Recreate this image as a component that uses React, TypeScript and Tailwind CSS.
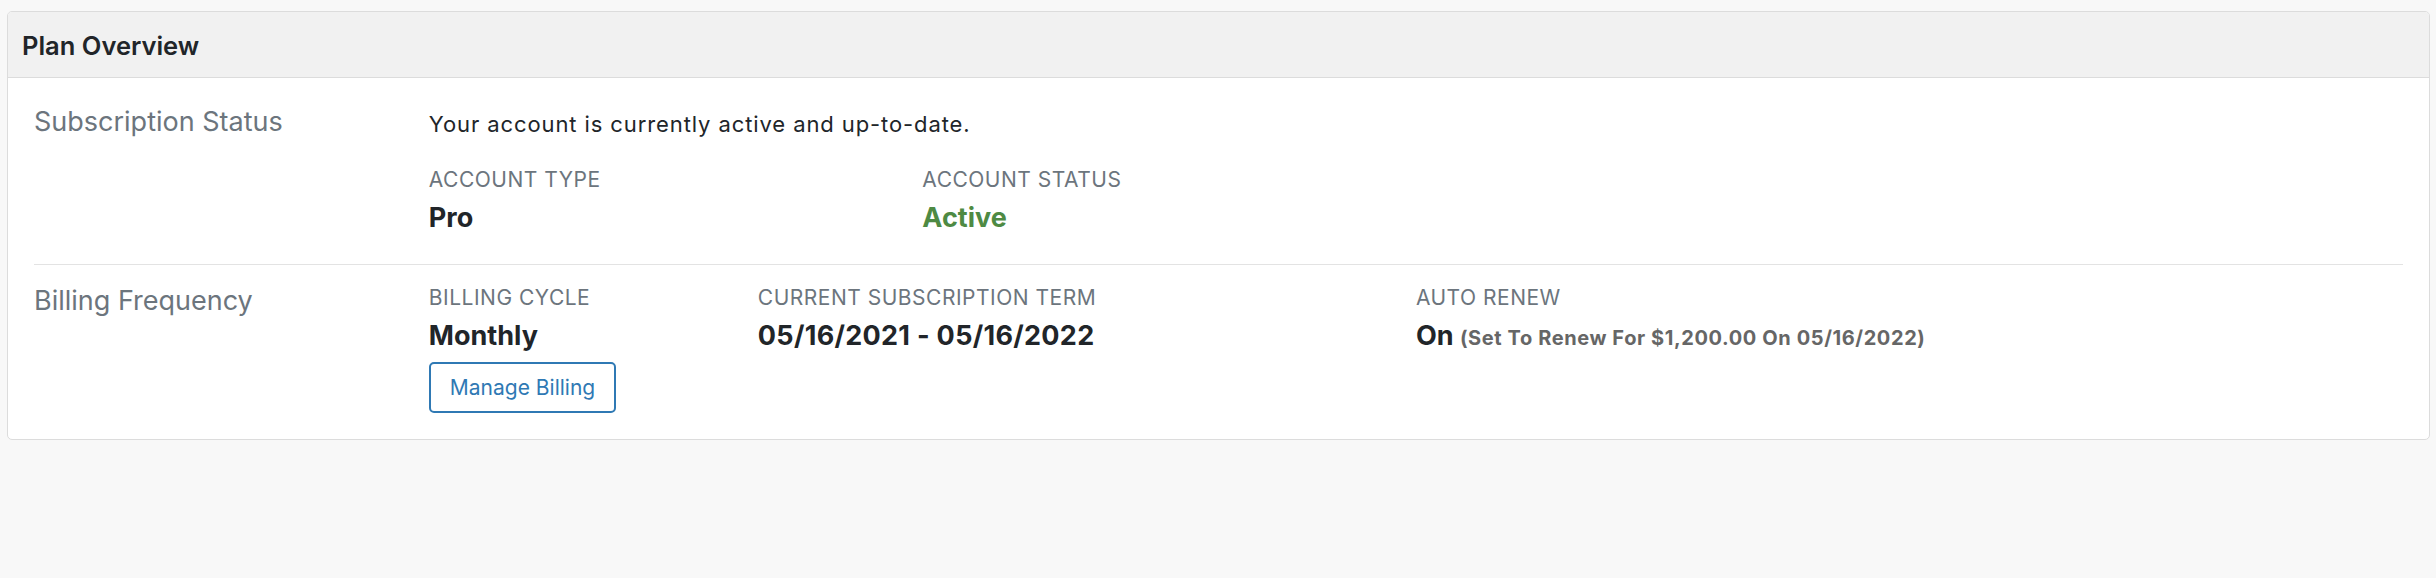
import React from "react";

const font = { fontFamily: "Inter, 'Noto Sans', sans-serif" };

function Field({ label, children }: { label: string; children: React.ReactNode }) {
  return (
    <div>
      <div className="text-[21px] leading-[30px] tracking-[0.5px] uppercase text-[#6c757d]">{label}</div>
      <div className="mt-[5px] text-[27px] leading-[36px] font-bold text-[#212529]">{children}</div>
    </div>
  );
}

export default function App() {
  return (
    <div className="min-h-screen bg-[#f8f8f8] pt-[11px] pl-[7px] pr-[6px]" style={font}>
      <div className="rounded-[5px] border border-[#dcdcdc] bg-white overflow-hidden">
        <div className="h-[66px] bg-[#f1f1f1] border-b border-[#dcdcdc] px-[14px] pt-[2px] flex items-center">
          <h2 className="text-[25.5px] font-semibold text-[#212529] leading-none">Plan Overview</h2>
        </div>
        <div className="px-[26px] pb-[26px]">
          <div className="grid grid-cols-6 pt-[24px] pb-[28px] border-b border-[#e3e3e3]">
            <div className="col-span-1 text-[27px] leading-[40px] text-[#6c757d]">Subscription Status</div>
            <div className="col-span-5 pt-[6px]">
              <div className="text-[22px] leading-[32px] tracking-[0.9px] text-[#212529]">
                Your account is currently active and up-to-date.
              </div>
              <div className="grid grid-cols-4 mt-[25px]">
                <Field label="Account Type">Pro</Field>
                <Field label="Account Status">
                  <span className="text-[#4e8a43]">Active</span>
                </Field>
              </div>
            </div>
          </div>
          <div className="grid grid-cols-6 pt-[16px]">
            <div className="col-span-1 text-[27px] leading-[40px] text-[#6c757d]">Billing Frequency</div>
            <div className="col-span-5 pt-[2px] grid grid-cols-6">
              <div className="col-span-1">
                <Field label="Billing Cycle">Monthly</Field>
                <button className="mt-[8px] h-[51px] px-[19px] rounded-[5px] border-2 border-[#2f79b4] text-[21px] text-[#2f79b4] bg-white">
                  Manage Billing
                </button>
              </div>
              <div className="col-span-2">
                <Field label="Current Subscription Term">
                  <span className="tracking-[0.3px]">05/16/2021 - 05/16/2022</span>
                </Field>
              </div>
              <div className="col-span-3">
                <Field label="Auto Renew">
                  On{" "}
                  <span className="text-[20px] tracking-[0.6px] font-bold text-[#666666]">
                    (Set To Renew For $1,200.00 On 05/16/2022)
                  </span>
                </Field>
              </div>
            </div>
          </div>
        </div>
      </div>
    </div>
  );
}
